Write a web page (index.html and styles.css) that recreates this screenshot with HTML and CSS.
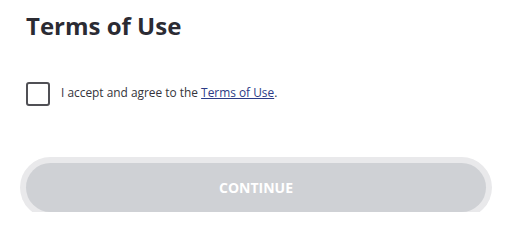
FILE: index.html
```html
<!DOCTYPE html>
<html lang="en">
<head>
<meta charset="utf-8">
<title>Terms of Use</title>
<link rel="stylesheet" href="styles.css">
</head>
<body>
<main class="panel">
  <h1 class="title">Terms of Use</h1>
  <label class="agree">
    <span class="checkbox"></span>
    <span class="agree-text">I accept and agree to the <a class="link" href="#">Terms of Use</a>.</span>
  </label>
  <button class="continue" type="button">CONTINUE</button>
</main>
</body>
</html>
```
FILE: styles.css
```css
html, body {
  margin: 0;
  padding: 0;
  background: #ffffff;
}
body {
  font-family: "Open Sans", "Liberation Sans", sans-serif;
  color: #333333;
}
.panel {
  width: 460px;
  padding: 10px 24px 0 26px;
}
.title {
  margin: 0;
  font-size: 24px;
  line-height: 32px;
  font-weight: 700;
  color: #2b2b33;
}
.agree {
  display: flex;
  align-items: center;
  gap: 11px;
  margin-top: 40px;
  height: 24px;
}
.checkbox {
  box-sizing: border-box;
  width: 24px;
  height: 24px;
  border: 2px solid #505055;
  border-radius: 3px;
  flex: none;
}
.agree-text {
  font-size: 11.9px;
  line-height: 16px;
  color: #35353b;
  margin-top: -4px;
}
.link {
  color: #2c3b87;
  text-decoration: underline;
}
.continue {
  display: block;
  margin-top: 57px;
  width: 460px;
  height: 49px;
  border: 0;
  border-radius: 25px;
  background: #cfd1d5;
  box-shadow: 0 0 0 6px #e9e9eb;
  color: #ffffff;
  font-family: "Open Sans", "Liberation Sans", sans-serif;
  font-size: 14px;
  font-weight: 700;
  padding: 0;
}
```
